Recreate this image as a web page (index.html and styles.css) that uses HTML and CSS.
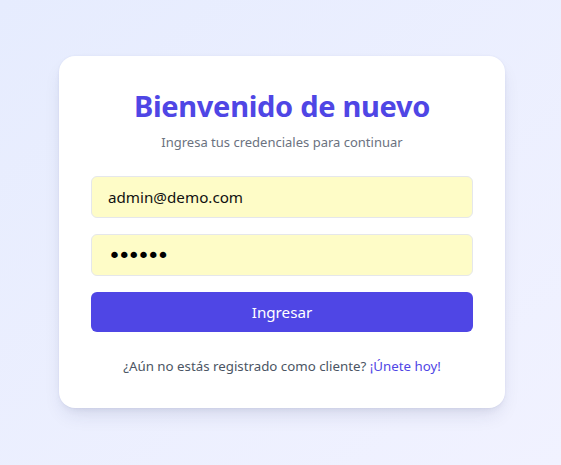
FILE: index.html
```html
<!DOCTYPE html>
<html lang="es">
<head>
<meta charset="utf-8">
<title>Iniciar sesión</title>
<link rel="stylesheet" href="styles.css">
</head>
<body>
<main class="page">
  <section class="card">
    <h1 class="title">Bienvenido de nuevo</h1>
    <p class="subtitle">Ingresa tus credenciales para continuar</p>
    <form class="form">
      <input class="field" type="email" value="admin@demo.com" aria-label="Correo">
      <input class="field field-pass" type="password" value="123456" aria-label="Contraseña">
      <button class="btn" type="button">Ingresar</button>
    </form>
    <p class="footer">¿Aún no estás registrado como cliente? <a class="link" href="#">¡Únete hoy!</a></p>
  </section>
</main>
</body>
</html>
```

FILE: styles.css
```css
* { box-sizing: border-box; }
html, body { margin: 0; padding: 0; }
body {
  font-family: "Noto Sans", "Open Sans", sans-serif;
  background: linear-gradient(to bottom right, #e6ecfe, #f1f2ff);
  min-height: 465px;
}
.page {
  min-height: 465px;
  display: flex;
  align-items: center;
  justify-content: center;
  padding-left: 3px;
  padding-bottom: 1px;
}
.card {
  width: 446px;
  background: #ffffff;
  border-radius: 16px;
  padding: 32px;
  box-shadow: 0 10px 20px -5px rgba(30, 40, 90, 0.12), 0 4px 8px -4px rgba(30, 40, 90, 0.1), 0 0 2px rgba(60, 80, 160, 0.08);
}
.title {
  margin: 0;
  font-size: 29px;
  line-height: 36px;
  font-weight: 700;
  text-align: center;
  color: #4f46e5;
  letter-spacing: -0.3px;
}
.subtitle {
  margin: 8px 0 0;
  font-size: 13px;
  line-height: 20px;
  color: #6b7280;
  text-align: center;
}
.form {
  margin-top: 24px;
  display: flex;
  flex-direction: column;
  gap: 16px;
}
.field {
  display: block;
  width: 100%;
  height: 42px;
  padding: 10px 16px;
  font-family: inherit;
  font-size: 15.2px;
  line-height: 20px;
  color: #111111;
  background: #fefcc7;
  border: 1px solid #e5e7eb;
  border-radius: 6px;
  outline: none;
}
.field-pass {
  font-family: "DejaVu Sans", sans-serif;
  font-size: 22px;
  letter-spacing: -3.3px;
  color: #000000;
}
.btn {
  display: block;
  width: 100%;
  height: 40px;
  border: 0;
  border-radius: 6px;
  background: #4f46e5;
  color: #ffffff;
  font-family: inherit;
  font-size: 15.2px;
  line-height: 20px;
}
.footer {
  margin: 24px 0 0;
  font-size: 13.3px;
  line-height: 20px;
  color: #4b5563;
  text-align: center;
}
.link {
  color: #4f46e5;
  text-decoration: none;
}
```
